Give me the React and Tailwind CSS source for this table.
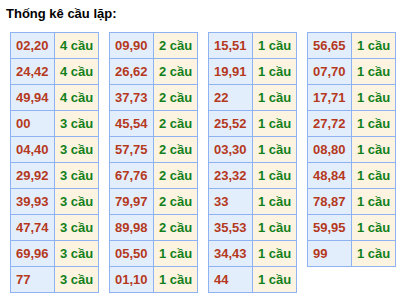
import React from "react";

const cols = [
  [["02,20", "4"], ["24,42", "4"], ["49,94", "4"], ["00", "3"], ["04,40", "3"], ["29,92", "3"], ["39,93", "3"], ["47,74", "3"], ["69,96", "3"], ["77", "3"]],
  [["09,90", "2"], ["26,62", "2"], ["37,73", "2"], ["45,54", "2"], ["57,75", "2"], ["67,76", "2"], ["79,97", "2"], ["89,98", "2"], ["05,50", "1"], ["01,10", "1"]],
  [["15,51", "1"], ["19,91", "1"], ["22", "1"], ["25,52", "1"], ["03,30", "1"], ["23,32", "1"], ["33", "1"], ["35,53", "1"], ["34,43", "1"], ["44", "1"]],
  [["56,65", "1"], ["07,70", "1"], ["17,71", "1"], ["27,72", "1"], ["08,80", "1"], ["48,84", "1"], ["78,87", "1"], ["59,95", "1"], ["99", "1"]],
];

export default function App() {
  return (
    <div
      className="w-[409px] h-[296px] bg-white overflow-hidden"
      style={{ fontFamily: '"Liberation Sans", Arial, sans-serif' }}
    >
      <div className="pl-[6px] pt-[6px] text-[13px] leading-[16px] font-bold text-black">
        Thống kê cầu lặp:
      </div>
      <div className="flex items-start gap-[10px] pl-[10px] mt-[10px]">
        {cols.map((col, ci) => (
          <table
            key={ci}
            className="border-collapse w-[89px] border border-[#8eb2f2] text-[13px] font-bold"
          >
            <tbody>
              {col.map(([n, c], ri) => (
                <tr key={ri} className="h-[26px]">
                  <td className="border border-[#8eb2f2] bg-[#e3eefd] text-[#b5391d] pl-[5px] p-0 w-[44px] leading-[25px]">
                    {n}
                  </td>
                  <td className="border border-[#8eb2f2] bg-[#fdf3e1] text-[#12801a] pl-[5px] p-0 leading-[25px]">
                    {c} cầu
                  </td>
                </tr>
              ))}
            </tbody>
          </table>
        ))}
      </div>
    </div>
  );
}
